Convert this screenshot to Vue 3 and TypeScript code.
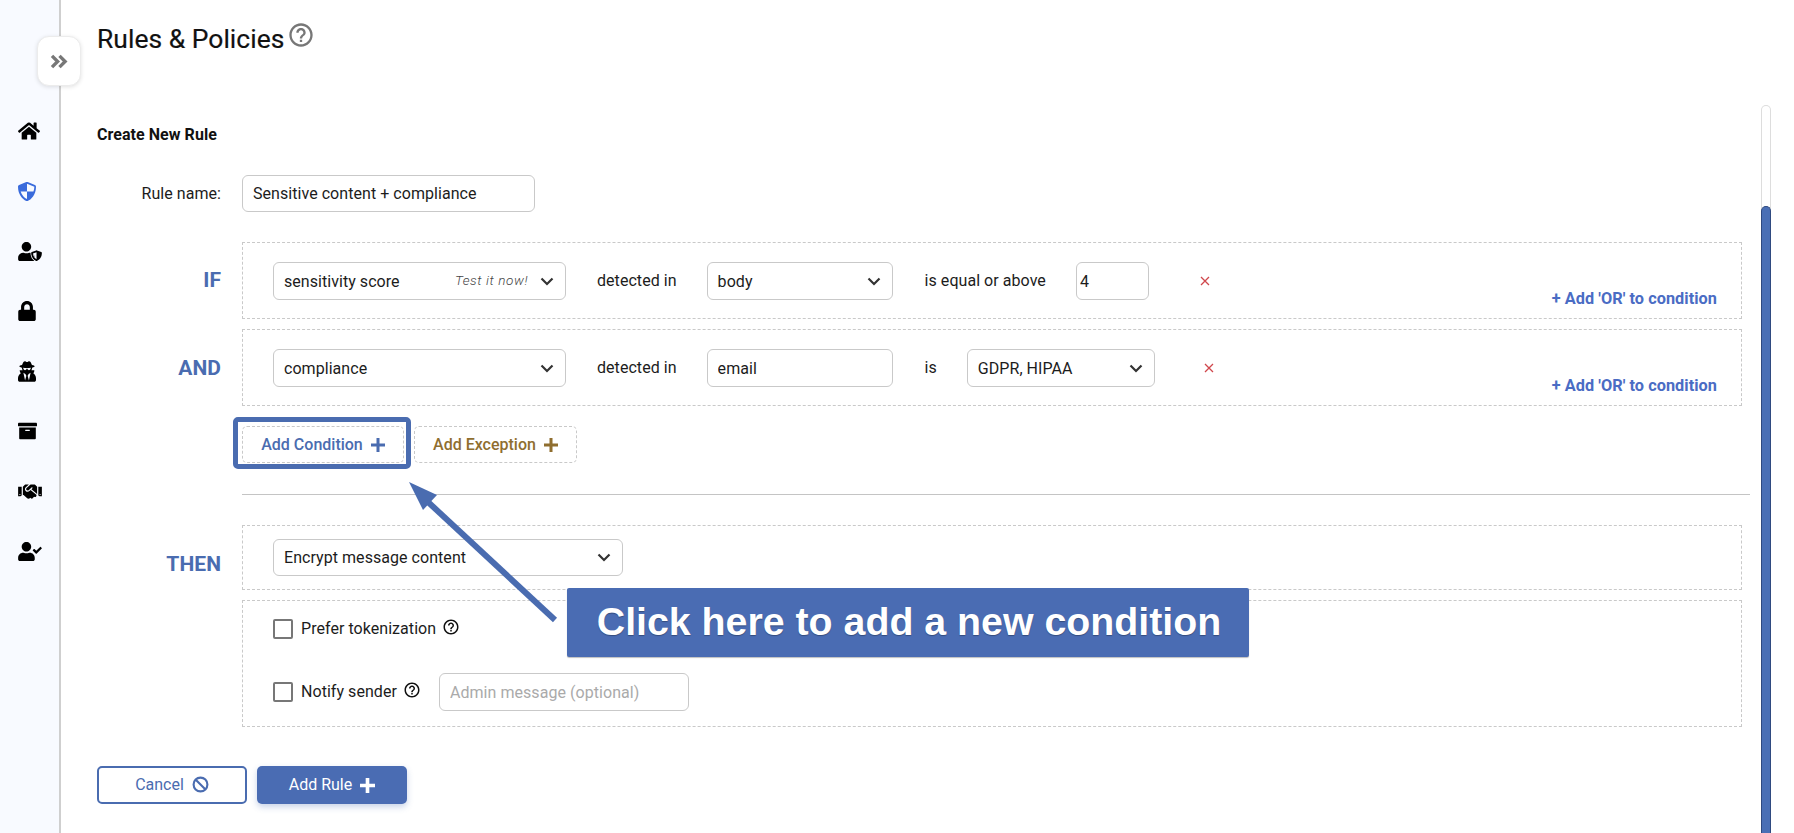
<script setup lang="ts">
interface NavIcon { vb: string; d: string[]; cls?: string; w: number; h: number }
const user = 'M224 256c70.7 0 128-57.3 128-128S294.7 0 224 0 96 57.3 96 128s57.3 128 128 128zm89.6 32h-16.7c-22.2 10.2-46.9 16-72.9 16s-50.6-5.8-72.9-16h-16.7C60.2 288 0 348.2 0 422.4V464c0 26.5 21.5 48 48 48h352c26.5 0 48-21.5 48-48v-41.6c0-74.2-60.2-134.4-134.4-134.4z'
const help = 'M11 18h2v-2h-2v2zm1-16C6.48 2 2 6.48 2 12s4.48 10 10 10 10-4.48 10-10S17.52 2 12 2zm0 18c-4.41 0-8-3.59-8-8s3.59-8 8-8 8 3.59 8 8-3.59 8-8 8zm0-14c-2.21 0-4 1.79-4 4h2c0-1.1.9-2 2-2s2 .9 2 2c0 2-3 1.75-3 5h2c0-2.25 3-2.5 3-5 0-2.21-1.79-4-4-4z'
const nav: NavIcon[] = [
  { vb: '0 0 576 512', w: 22, h: 20, d: ['M280.37 148.26L96 300.11V464a16 16 0 0 0 16 16l112.06-.29a16 16 0 0 0 15.92-16V368a16 16 0 0 1 16-16h64a16 16 0 0 1 16 16v95.64a16 16 0 0 0 16 16.05L464 480a16 16 0 0 0 16-16V300L295.67 148.26a12.19 12.19 0 0 0-15.3 0zM571.6 251.47L488 182.56V44.05a12 12 0 0 0-12-12h-56a12 12 0 0 0-12 12v72.61L318.47 43a48 48 0 0 0-61 0L4.34 251.47a12 12 0 0 0-1.6 16.9l25.5 31A12 12 0 0 0 45.15 301l235.22-193.74a12.19 12.19 0 0 1 15.3 0L530.9 301a12 12 0 0 0 16.9-1.6l25.5-31a12 12 0 0 0-1.7-16.93z'] },
  { vb: '16 0 480 512', w: 18, h: 21, cls: 'blue', d: ['M466.5 83.7l-192-80a48.15 48.15 0 0 0-36.9 0l-192 80C27.7 91.1 16 108.6 16 128c0 198.5 114.5 335.7 221.5 380.3 11.8 4.9 25.1 4.9 36.9 0C360.1 472.6 496 349.3 496 128c0-19.4-11.7-36.9-29.5-44.3zM256 52l196 80c-2 44-9 88-24 124H256zM256 256v202c-70-30-140-106-170-202z'] },
  { vb: '0 0 640 512', w: 24, h: 19, cls: 'halo', d: [user, 'M622.3 271.1l-115.2-45c-4.1-1.6-12.6-3.7-22.2 0l-115.2 45c-10.7 4.2-17.7 14-17.7 24.9 0 111.6 68.7 188.8 132.9 213.9 9.6 3.7 18 1.6 22.2 0C558.4 489.9 640 420.5 640 296c0-10.9-7-20.7-17.7-24.9zM496 273.3V462.4C461 446 406 398 400.5 311z'] },
  { vb: '0 0 448 512', w: 18, h: 20, d: ['M400 224h-24v-72C376 68.2 307.8 0 224 0S72 68.2 72 152v72H48c-26.5 0-48 21.5-48 48v192c0 26.5 21.5 48 48 48h352c26.5 0 48-21.5 48-48V272c0-26.5-21.5-48-48-48zm-104 0H152v-72c0-39.7 32.3-72 72-72s72 32.3 72 72v72z'] },
  { vb: '0 0 448 512', w: 18, h: 21, d: ['M383.9 308.3l23.9-62.6c4-10.5-3.7-21.7-15-21.7h-58.5c11-18.9 17.8-40.6 17.8-64v-.3c39.2-7.8 64-19.1 64-31.7 0-13.3-27.3-25.1-70.1-33-9.2-32.8-27-65.8-40.6-82.8-9.5-11.9-25.9-15.6-39.5-8.8l-27.6 13.8c-9 4.5-19.6 4.5-28.6 0L182.1 3.4c-13.6-6.8-30-3.1-39.5 8.8-13.5 17-31.4 50-40.6 82.8-42.7 7.9-70 19.7-70 33 0 12.6 24.8 23.9 64 31.7v.3c0 23.4 6.8 45.1 17.8 64H56.3c-11.5 0-19.2 11.7-14.7 22.3l25.8 60.2C27.3 329.8 0 372.7 0 422.4v44.8C0 491.9 20.1 512 44.8 512h358.4c24.7 0 44.8-20.1 44.8-44.8v-44.8c0-48.4-25.8-90.4-64.1-114.1zM176 480l-41.6-192 49.6 32 24 40-32 120zm96 0l-32-120 24-40 49.6-32L272 480zm41.7-298.5c-3.9 11.9-7 24.6-16.5 33.4-10.1 9.3-48 22.4-64-25-2.8-8.4-15.4-8.4-18.3 0-17 50.2-56 32.4-64 25-9.5-8.8-12.7-21.5-16.5-33.4-.8-2.5-6.3-5.7-6.3-5.8v-10.8c28.3 3.6 61 5.8 96 5.8s67.7-2.1 96-5.8v10.8c-.1.1-5.6 3.2-6.4 5.8z'] },
  { vb: '0 0 512 512', w: 19, h: 20, d: ['M32 448c0 17.7 14.3 32 32 32h384c17.7 0 32-14.3 32-32V160H32v288zm160-212c0-6.6 5.4-12 12-12h104c6.6 0 12 5.4 12 12v8c0 6.6-5.4 12-12 12H204c-6.6 0-12-5.4-12-12v-8zM480 32H32C14.3 32 0 46.3 0 64v48c0 8.8 7.2 16 16 16h480c8.8 0 16-7.2 16-16V64c0-17.7-14.3-32-32-32z'] },
  { vb: '0 0 640 512', w: 24, h: 19, d: ['M434.7 64h-85.9c-8 0-15.7 3-21.6 8.4l-98.3 90c-.1.1-.2.3-.3.4-16.6 15.6-16.3 40.5-2.1 56 12.7 13.9 39.4 17.6 56.1 2.7.1-.1.3-.1.4-.2l79.9-73.2c6.5-5.9 16.7-5.5 22.6 1 6 6.5 5.5 16.6-1 22.6l-26.1 23.9L504 313.8c2.9 2.4 5.5 5 7.9 7.7V128l-54.6-54.6c-5.9-6-14.1-9.4-22.6-9.4zM544 128.2v223.9c0 17.7 14.3 32 32 32h64V128.2h-96zm48 223.9c-8.8 0-16-7.2-16-16s7.2-16 16-16 16 7.2 16 16-7.2 16-16 16zM0 384h64c17.7 0 32-14.3 32-32V128.2H0V384zm48-63.9c8.8 0 16 7.2 16 16s-7.2 16-16 16-16-7.2-16-16c0-8.9 7.2-16 16-16zm435.9 18.6L334.6 217.5l-30 27.5c-29.7 27.1-75.2 24.5-101.7-4.4-26.9-29.4-24.8-74.9 4.4-101.7L289.1 64h-83.8c-8.5 0-16.6 3.4-22.6 9.4L128 128v223.9h18.3l90.5 81.9c27.4 22.3 67.7 18.1 90-9.3l.2-.2 17.9 15.5c15.9 13 39.4 10.5 52.3-5.4l31.4-38.6 5.4 4.4c13.7 11.1 33.9 9.1 45-4.7l9.5-11.7c11.2-13.8 9.1-33.9-4.6-45.1z'] },
  { vb: '0 0 640 512', w: 24, h: 19, d: [user, 'M637 161.1l-27.8-28.1c-4.6-4.6-12.1-4.7-16.8-.1L488.2 236.7l-45.5-45.8c-4.6-4.6-12.1-4.7-16.8-.1l-28.1 27.9c-4.6 4.6-4.7 12.1-.1 16.8l81.7 82.3c4.6 4.6 12.1 4.7 16.8.1L636.9 177.9c4.7-4.6 4.7-12.1.1-16.8z'] }
]
</script>

<template>
  <div class="page">
    <aside class="sidebar">
      <div v-for="(icon, i) in nav" :key="i" class="nav-item">
        <svg :class="icon.cls" :viewBox="icon.vb" :width="icon.w" :height="icon.h">
          <path v-for="(p, j) in icon.d" :key="j" :d="p" />
        </svg>
      </div>
    </aside>
    <button class="toggle" aria-label="Expand">
      <svg viewBox="0 0 20 16" width="19" height="15">
        <path d="M2 2l6 6-6 6M10 2l6 6-6 6" />
      </svg>
    </button>

    <main class="main">
      <header class="title-row">
        <h1>Rules &amp; Policies</h1>
        <svg class="title-help" viewBox="0 0 24 24" width="28" height="28"><path :d="help" /></svg>
      </header>
      <h2>Create New Rule</h2>

      <div class="row name-row">
        <label class="row-label">Rule name:</label>
        <input class="field name-input" value="Sensitive content + compliance" readonly />
      </div>

      <div class="row if-row">
        <span class="keyword">IF</span>
        <div class="box cond">
          <div class="field select w-293">
            <span>sensitivity score</span>
            <em>Test it now!</em>
            <svg class="chev" viewBox="0 0 14 9"><path d="M1.5 1.5L7 7l5.5-5.5" /></svg>
          </div>
          <span class="word word-detected">detected in</span>
          <div class="field select w-186">
            <span>body</span>
            <svg class="chev" viewBox="0 0 14 9"><path d="M1.5 1.5L7 7l5.5-5.5" /></svg>
          </div>
          <span class="word word-equal">is equal or above</span>
          <input class="field num-input" value="4" readonly />
          <svg class="remove remove-a" viewBox="0 0 10 10" width="10" height="10"><path d="M1 1l8 8M9 1l-8 8" /></svg>
          <a class="add-or">+ Add 'OR' to condition</a>
        </div>
      </div>

      <div class="row and-row">
        <span class="keyword">AND</span>
        <div class="box cond">
          <div class="field select w-293">
            <span>compliance</span>
            <svg class="chev" viewBox="0 0 14 9"><path d="M1.5 1.5L7 7l5.5-5.5" /></svg>
          </div>
          <span class="word word-detected">detected in</span>
          <input class="field text-input w-186" value="email" readonly />
          <span class="word word-is">is</span>
          <div class="field select w-188">
            <span>GDPR, HIPAA</span>
            <svg class="chev" viewBox="0 0 14 9"><path d="M1.5 1.5L7 7l5.5-5.5" /></svg>
          </div>
          <svg class="remove remove-b" viewBox="0 0 10 10" width="10" height="10"><path d="M1 1l8 8M9 1l-8 8" /></svg>
          <a class="add-or">+ Add 'OR' to condition</a>
        </div>
      </div>

      <div class="row add-row">
        <span></span>
        <div class="add-buttons">
          <button class="dash-btn condition">
            Add Condition
            <svg viewBox="0 0 14 14" width="14" height="14"><path d="M7 0v14M0 7h14" /></svg>
            <span class="highlight"></span>
          </button>
          <button class="dash-btn exception">
            Add Exception
            <svg viewBox="0 0 14 14" width="14" height="14"><path d="M7 0v14M0 7h14" /></svg>
          </button>
        </div>
      </div>

      <hr />

      <div class="row then-row">
        <span class="keyword then">THEN</span>
        <div class="box then-box">
          <div class="field select w-350 then-select">
            <span>Encrypt message content</span>
            <svg class="chev" viewBox="0 0 14 9"><path d="M1.5 1.5L7 7l5.5-5.5" /></svg>
          </div>
        </div>
      </div>

      <div class="row options-row">
        <span></span>
        <div class="box options">
          <div class="option">
            <span class="check"></span>
            <span class="opt-text">Prefer tokenization</span>
            <svg class="opt-help" viewBox="0 0 24 24" width="18" height="18"><path :d="help" /></svg>
          </div>
          <div class="option">
            <span class="check"></span>
            <span class="opt-text">Notify sender</span>
            <svg class="opt-help" viewBox="0 0 24 24" width="18" height="18"><path :d="help" /></svg>
            <input class="field admin" placeholder="Admin message (optional)" readonly />
          </div>
        </div>
      </div>

      <div class="actions">
        <button class="btn outline">
          <span>Cancel</span>
          <svg viewBox="0 0 16 16" width="17" height="17"><circle cx="8" cy="8" r="6.5" /><path d="M3.5 3.5l9 9" /></svg>
        </button>
        <button class="btn solid">
          <span>Add Rule</span>
          <svg viewBox="0 0 14 14" width="15" height="15"><path d="M7 0v14M0 7h14" /></svg>
        </button>
      </div>
    </main>

    <div class="scrollbar"><div class="thumb"></div></div>

    <svg class="arrow" viewBox="0 0 160 150" width="160" height="150">
      <path d="M146 138L19 20" />
      <polygon points="0,0 28,13 14,28" />
    </svg>
    <div class="callout"><span>Click here to add a new condition</span></div>
  </div>
</template>

<style>
html, body { margin: 0; background: #fff; }
</style>

<style scoped>
.page {
  position: relative;
  display: flex;
  width: 1794px;
  height: 833px;
  overflow: hidden;
  background: #fff;
  color: #1c1c1c;
  font-family: Roboto, "Liberation Sans", sans-serif;
  font-size: 16px;
  letter-spacing: .05px;
}
.sidebar {
  box-sizing: border-box;
  flex: 0 0 61px;
  padding: 101px 0 0 18px;
  background: #f8faff;
  border-right: 2px solid #cfcfcf;
}
.nav-item { display: flex; align-items: center; height: 60px; }
.nav-item svg { fill: #000; display: block; }
.nav-item svg.blue { fill: #3a6bdc; fill-rule: evenodd; }
.nav-item svg.halo path:last-child {
  fill-rule: evenodd;
  stroke: #f8faff;
  stroke-width: 34px;
  paint-order: stroke;
}
.toggle {
  position: absolute;
  left: 37px;
  top: 36px;
  width: 44px;
  height: 50px;
  padding: 0;
  display: flex;
  align-items: center;
  justify-content: center;
  background: #fff;
  border: 1px solid #ececec;
  border-radius: 12px;
  box-shadow: 0 1px 4px rgba(0, 0, 0, .12);
}
.toggle path { fill: none; stroke: #777; stroke-width: 3.6; }
.main {
  box-sizing: border-box;
  flex: 0 0 1700px;
  padding-left: 36px;
}
.title-row { display: flex; align-items: flex-start; height: 76px; }
h1 {
  margin: 24px 0 0;
  font-size: 26.4px;
  line-height: 30px;
  font-weight: 400;
  color: #111;
  -webkit-text-stroke: .2px #111;
}
.title-help { margin: 21px 0 0 3px; fill: #777; }
h2 {
  margin: 49px 0 0;
  font-size: 16px;
  line-height: 20px;
  font-weight: 700;
  color: #111;
}
.row {
  display: grid;
  grid-template-columns: 124px 1500px;
  column-gap: 21px;
  align-items: center;
}
.row-label { text-align: right; font-size: 16px; }
.name-row { margin-top: 30px; }
.if-row { margin-top: 30px; }
.and-row { margin-top: 10px; }
.add-row { margin-top: 20px; }
.then-row { margin-top: 30px; }
.options-row { margin-top: 10px; }
.keyword {
  text-align: right;
  font-size: 21px;
  font-weight: 700;
  color: #4a6cb0;
}
.if-row .keyword { padding-bottom: 2px; }
.keyword.then { padding-top: 12px; }
.field {
  box-sizing: border-box;
  height: 38px;
  border: 1px solid #c9c9c9;
  border-radius: 6px;
  background: #fff;
  color: #1c1c1c;
  font-family: inherit;
  font-size: 16px;
  letter-spacing: .05px;
  outline: none;
}
input.field { padding: 0 10px; }
.name-input { width: 293px; height: 37px; }
.box {
  box-sizing: border-box;
  border: 1px dashed #c9c9c9;
}
.cond {
  display: flex;
  align-items: flex-start;
  height: 77px;
  padding: 19px 24px 0 30px;
}
.select {
  display: flex;
  align-items: center;
  flex: none;
  padding: 0 11px 0 10px;
}
.select em {
  margin-left: auto;
  margin-right: 12px;
  margin-bottom: 2px;
  font-size: 13.5px;
  font-weight: 300;
  letter-spacing: .6px;
  color: #444;
}
.chev {
  width: 14px;
  height: 9px;
  margin-left: auto;
  flex: none;
}
.select em + .chev { margin-left: 0; }
.chev path { fill: none; stroke: #333; stroke-width: 2.2; }
.w-293 { width: 293px; }
.w-186 { width: 186px; flex: none; }
.w-188 { width: 188px; }
.w-350 { width: 350px; }
.word { line-height: 38px; flex: none; white-space: nowrap; }
.word-detected { margin: 0 30px 0 31px; }
.word-equal { margin: 0 30px 0 32px; }
.word-is { margin: 0 30px 0 32px; }
.num-input { width: 73px; flex: none; }
input.num-input { padding: 0 3px; }
.remove { flex: none; margin-top: 14px; }
.remove path { stroke: #d0474c; stroke-width: 1.3; fill: none; }
.remove-a { margin-left: 51px; }
.remove-b { margin-left: 49px; }
.add-or {
  margin-left: auto;
  margin-top: 27px;
  line-height: 20px;
  font-size: 16.3px;
  font-weight: 700;
  color: #4a6cc4;
  white-space: nowrap;
}
.add-buttons { display: flex; gap: 10px; }
.dash-btn {
  position: relative;
  box-sizing: border-box;
  display: flex;
  align-items: center;
  justify-content: center;
  gap: 8px;
  width: 163px;
  height: 37px;
  padding: 0;
  background: #fff;
  border: 1px dashed #c9c9c9;
  border-radius: 5px;
  font-family: inherit;
  font-size: 16px;
  font-weight: 500;
}
.dash-btn svg path { fill: none; stroke: currentColor; stroke-width: 3; }
.condition { color: #4a6cb0; width: 162px; }
.exception { color: #8f6e2f; }
.highlight {
  position: absolute;
  left: -10px;
  top: -10px;
  right: -8px;
  bottom: -7px;
  border: 5px solid #4a6cb0;
  border-radius: 5px;
  pointer-events: none;
}
hr {
  width: 1508px;
  margin: 31px 0 0 145px;
  border: 0;
  border-top: 1px solid #c4c4c4;
}
.then-box {
  height: 65px;
  padding: 13px 0 0 30px;
}
.then-select { height: 37px; }
.options {
  display: flex;
  flex-direction: column;
  gap: 25px;
  height: 127px;
  padding: 9px 0 0 30px;
}
.option { display: flex; align-items: center; height: 38px; }
.check {
  box-sizing: border-box;
  width: 20px;
  height: 20px;
  border: 2px solid #777;
  border-radius: 2px;
  flex: none;
}
.opt-text { margin: 0 0 2px 8px; }
.opt-help { margin: -4px 0 0 6px; fill: #111; }
.admin { width: 250px; margin-left: 18px; }
.admin::placeholder { color: #aaa; opacity: 1; }
.actions { display: flex; gap: 10px; margin-top: 39px; }
.btn {
  box-sizing: border-box;
  display: flex;
  align-items: center;
  justify-content: center;
  gap: 8px;
  width: 150px;
  height: 38px;
  padding: 0;
  border-radius: 5px;
  font-family: inherit;
  font-size: 16px;
  font-weight: 400;
}
.btn span { margin-bottom: 2px; }
.outline { background: #fff; border: 2px solid #4a6cb0; color: #4a6cb0; gap: 8px; }
.outline svg { margin-bottom: 2px; }
.outline svg * { fill: none; stroke: #4a6cb0; stroke-width: 2; }
.solid {
  background: #4a6cb3;
  border: 0;
  color: #fff;
  box-shadow: 0 3px 6px rgba(74, 108, 179, .3);
}
.solid svg path { fill: none; stroke: #fff; stroke-width: 3.4; }
.scrollbar {
  box-sizing: border-box;
  flex: 0 0 10px;
  margin-top: 105px;
  padding-top: 101px;
  height: 728px;
  background: #fff;
  border-radius: 5px 5px 0 0;
  box-shadow: inset 0 0 0 1px #ddd;
}
.thumb {
  box-sizing: border-box;
  height: 100%;
  background: #4a6fb5;
  border: 1px solid #2f4a80;
  border-bottom: 0;
  border-radius: 5px 5px 0 0;
}
.arrow {
  position: absolute;
  left: 409px;
  top: 482px;
}
.arrow path { fill: none; stroke: #4a6cb0; stroke-width: 6; }
.arrow polygon { fill: #4a6cb0; }
.callout {
  position: absolute;
  left: 567px;
  top: 588px;
  box-sizing: border-box;
  width: 682px;
  height: 69px;
  display: flex;
  align-items: center;
  justify-content: center;
  background: #4a6cb3;
  border-radius: 2px;
  box-shadow: 0 1px 1px rgba(0, 0, 0, .25);
  color: #fff;
  font-family: "Liberation Sans", Arial, sans-serif;
  font-size: 39.3px;
  font-weight: 700;
  letter-spacing: 0;
  white-space: nowrap;
  text-shadow: 0 1px 1px rgba(0, 0, 0, .3);
}
.callout span { margin: 0 0 2px 2px; }
</style>
